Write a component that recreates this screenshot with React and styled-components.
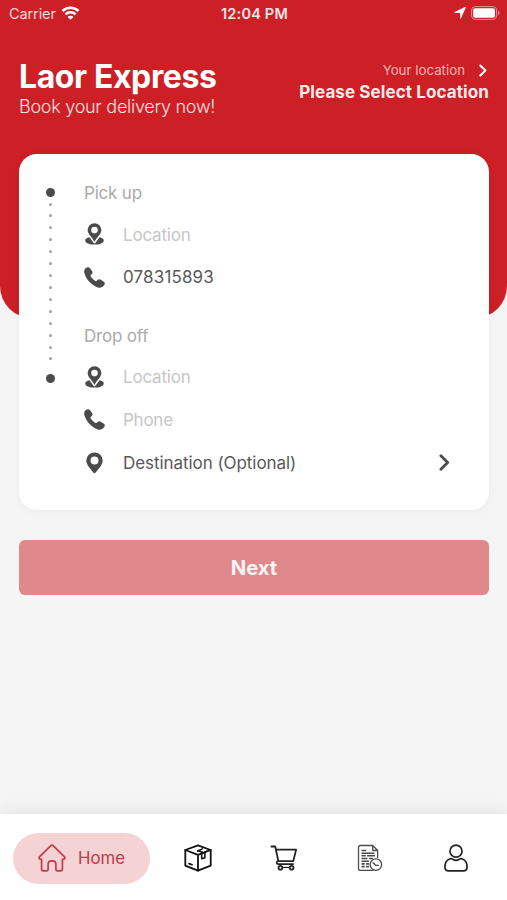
import { useState } from 'react';
import styled, { createGlobalStyle } from 'styled-components';

const App = () => {
  const [tab, setTab] = useState('home');

  return (
    <>
      <GlobalStyle />
      <Screen>
        <Header>
          <StatusBar>
            <Carrier>
              Carrier
              <WifiIcon />
            </Carrier>
            <Clock>12:04 PM</Clock>
            <StatusIcons>
              <ArrowIcon />
              <BatteryIcon />
            </StatusIcons>
          </StatusBar>
          <TitleRow>
            <div>
              <Title>Laor Express</Title>
              <Subtitle>Book your delivery now!</Subtitle>
            </div>
            <LocationPicker>
              <LocationLabel>
                Your location
                <ChevronIcon width={8} height={13} />
              </LocationLabel>
              <LocationValue>Please Select Location</LocationValue>
            </LocationPicker>
          </TitleRow>
        </Header>

        <Card>
          <Timeline>
            <Stop />
            <Dots>
              {dots.map(dot => (
                <Dot key={dot} />
              ))}
            </Dots>
            <Stop />
          </Timeline>
          <Fields>
            <GroupLabel>Pick up</GroupLabel>
            <Field>
              <PlaceIcon />
              <FieldText $empty $spacing={-0.2}>Location</FieldText>
            </Field>
            <Field>
              <PhoneIcon />
              <FieldText $spacing={0.15}>078315893</FieldText>
            </Field>
            <GroupLabel $second>Drop off</GroupLabel>
            <Field>
              <PlaceIcon />
              <FieldText $empty $spacing={-0.2}>Location</FieldText>
            </Field>
            <Field>
              <PhoneIcon />
              <FieldText $empty $spacing={-0.25}>Phone</FieldText>
            </Field>
            <Field>
              <PinIcon />
              <FieldText $spacing={-0.06}>Destination (Optional)</FieldText>
              <ChevronIcon width={11} height={17} />
            </Field>
          </Fields>
        </Card>

        <NextButton>Next</NextButton>

        <TabBar>
          {tabs.map(({ id, label, Icon }) => (
            <Tab
              key={id}
              $active={tab === id}
              aria-label={label}
              onClick={() => setTab(id)}
            >
              <Icon />
              {tab === id && <span>{label}</span>}
            </Tab>
          ))}
        </TabBar>
      </Screen>
    </>
  );
};

export default App;

const dots = Array.from({ length: 14 }, (_, i) => i);

const WifiIcon = () => (
  <svg width="19" height="14" viewBox="0 0 18 14" fill="none" stroke="#fff" strokeWidth="2.5">
    <path d="M1 5a11.6 11.6 0 0 1 16 0" />
    <path d="M3.9 8.4a7.4 7.4 0 0 1 10.2 0" />
    <path d="M9 13.8 6 10.9a4.2 4.2 0 0 1 6 0Z" fill="#fff" stroke="none" />
  </svg>
);

const ArrowIcon = () => (
  <svg width="12" height="12" viewBox="0 0 12 12" fill="#fff">
    <path d="M11.7.7 7 11.3c-.2.5-.9.4-.9-.2V6H.9C.3 6 .2 5.3.7 5.1L11 .1c.6-.2 1 .1.7.6Z" />
  </svg>
);

const BatteryIcon = () => (
  <svg width="29" height="14" viewBox="0 0 29 14" fill="none">
    <rect x=".6" y=".6" width="25" height="12.8" rx="3.6" stroke="#fff" strokeOpacity=".5" />
    <rect x="2.2" y="2.2" width="21.8" height="9.6" rx="2" fill="#fff" />
    <path d="M27.2 4.8c1.8.6 1.8 3.8 0 4.4Z" fill="#fff" fillOpacity=".55" />
  </svg>
);

const ChevronIcon = props => (
  <svg viewBox="0 0 10 16" fill="none" stroke="currentColor" {...props}>
    <path d="m1.6 1.7 6.4 6.3-6.4 6.3" strokeWidth="2.6" strokeLinecap="round" strokeLinejoin="round" />
  </svg>
);

const PlaceIcon = () => (
  <svg width="20" height="22" viewBox="0 0 20 22" fill="#4b4b4d">
    <path
      fillRule="evenodd"
      d="M10 .2a6.9 6.9 0 0 1 6.9 6.9c0 3.7-3.6 6.2-6.9 11.7C6.7 13.3 3.1 10.8 3.1 7.1A6.9 6.9 0 0 1 10 .2Zm0 3.6a3.3 3.3 0 1 0 0 6.6 3.3 3.3 0 0 0 0-6.6Z"
    />
    <path d="M5 14.3 9.2 20q.8.9 1.6 0l4.2-5.7c2.6.6 4.3 1.7 4.3 3.1 0 2.5-4.2 4.2-9.3 4.2S.7 19.900.7 17.4c0-1.4 1.7-2.5 4.3-3.1Z" />
  </svg>
);

const PhoneIcon = () => (
  <svg width="21" height="21" viewBox="0 0 21 21" fill="#4b4b4d">
    <path d="M1.300 1.500C3 0 4.800-.3 6 1.200l2 2.700c.8 1.100.7 2.300-.3 3.200l-.9.9c-.5.500-.4 1 .1 1.800 1 1.500 2.300 2.800 4.100 3.900.8.5 1.300.5 1.800 0l1-.9c.9-.8 2-.9 3-.1l3 2.100c1.300 1 1.300 2.300.3 3.500-1.700 2.100-3.700 2.900-6.300 2.100C7.900 18.600 2.300 12.900.5 6.600-.1 4.400.1 2.700 1.300 1.500Z" />
  </svg>
);

const PinIcon = () => (
  <svg width="20" height="22" viewBox="0 0 20 22" fill="#4b4b4d">
    <path
      fillRule="evenodd"
      d="M10 .4a8.200 8.200 0 0 1 8.200 8.200c0 4.400-4.600 8.800-7.300 12.200q-.9 1-1.800 0C6.400 17.400 1.800 13 1.800 8.600A8.200 8.200 0 0 1 10 .4Zm0 4a4 4 0 1 0 0 8 4 4 0 0 0 0-8Z"
    />
  </svg>
);

const HomeIcon = () => (
  <svg width="28" height="28" viewBox="0 0 28 28" fill="none" stroke="currentColor" strokeWidth="1.7" strokeLinejoin="round">
    <path d="M12.9 1.6q1.1-1 2.200 0l11.200 11c1.300 1.300.5 2.700-1.100 2.700h-.8v9.800q0 1.700-1.700 1.700h-3.500q-1.300 0-1.300-1.300v-5.300c0-4.400-7.800-4.400-7.800 0v5.300q0 1.300-1.300 1.300H5.300q-1.700 0-1.700-1.700v-9.800h-.8c-1.600 0-2.400-1.400-1.100-2.700Z" />
  </svg>
);

const BoxIcon = () => (
  <svg width="28" height="28" viewBox="0 0 28 28" fill="none" stroke="#111" strokeWidth="1.8" strokeLinejoin="round" strokeLinecap="round">
    <path d="M14 1.3 26.7 6v15.6L14 26.7 1.3 21.6V6Z" />
    <path d="M1.3 6 14 10.8 26.7 6M14 10.8v15.900" />
    <path d="m13.4 7.1 4.9-2.2M18.3 9.2l4.7-2.1" strokeWidth="1.5" />
    <path d="M17.7 9.8v5l3.2-1V8.500" strokeWidth="1.6" />
    <path d="m14.3 6.6 4.5 1.9M5 19.6l3.1 1.1" strokeWidth="1.7" />
  </svg>
);

const CartIcon = () => (
  <svg width="28" height="28" viewBox="0 0 28 28" fill="none" stroke="#222" strokeWidth="1.8" strokeLinejoin="round">
    <path d="M.7 2.500h4.500l3.200 14.600h14.900l2.800-11.500H6.100M8.400 16.800c-2 .2-2.300 3.400 0 3.400h15.400" />
    <circle cx="10.4" cy="23.7" r="1.9" />
    <circle cx="21.6" cy="23.7" r="1.9" />
    <path d="M12.4 23.4h7.2" strokeWidth="1.2" />
  </svg>
);

const HistoryIcon = () => (
  <svg width="26" height="28" viewBox="0 0 26 28" fill="none" stroke="#4c4c4c" strokeWidth="1.3" strokeLinejoin="round">
    <path d="M20.6 14V6.500l-4.900-5H3.400q-1.900 0-1.900 1.900v21q0 1.900 1.900 1.900h13.100M15.700 1.500v5h4.900" />
    <path d="M4.5 6.500h4.500M4.5 9.200h13M4.5 11.8h4.300M10.1 11.8h8M4.5 14.500h6M12 14.500h4M4.5 17.200h7.500M4.5 19.900h3.200M9.1 19.900h3M4.5 22.600h3.200M9.1 22.600h3" strokeWidth="1.6" />
    <circle cx="18.9" cy="20.6" r="5.7" />
    <path d="m15.7 18.5 3.2 2.900h2.900" />
  </svg>
);

const UserIcon = () => (
  <svg width="24" height="28" viewBox="0 0 24 28" fill="none" stroke="#222" strokeWidth="1.7" strokeLinejoin="round">
    <circle cx="12" cy="7.2" r="6" />
    <path d="M6.2 14.700q1.200-.4 2.300.4c2.200 1.700 4.800 1.700 7 0q1.100-.8 2.300-.4c3.700 1.200 5.300 4.500 5.300 8.200q0 3.900-3.700 3.900H4.600q-3.700 0-3.700-3.900c0-3.700 1.600-7 5.300-8.200Z" />
  </svg>
);

const tabs = [
  { id: 'home', label: 'Home', Icon: HomeIcon },
  { id: 'packages', label: 'Packages', Icon: BoxIcon },
  { id: 'cart', label: 'Cart', Icon: CartIcon },
  { id: 'history', label: 'History', Icon: HistoryIcon },
  { id: 'profile', label: 'Profile', Icon: UserIcon },
];

const GlobalStyle = createGlobalStyle`
  * {
    box-sizing: border-box;
  }
  body {
    margin: 0;
    font-family: Inter, 'Liberation Sans', sans-serif;
  }
  button {
    font-family: inherit;
    border: none;
    cursor: pointer;
  }
  svg {
    display: block;
    flex-shrink: 0;
  }
`;

const Screen = styled.div`
  display: flex;
  flex-direction: column;
  width: 507px;
  height: 900px;
  overflow: hidden;
  background: #f5f5f5;
`;

const Header = styled.header`
  flex: 0 0 318px;
  background: #cd1f26;
  border-radius: 0 0 32px 32px;
  color: #fff;
`;
const StatusBar = styled.div`
  display: grid;
  grid-template-columns: 1fr auto 1fr;
  align-items: center;
  height: 26px;
  padding: 0 7px 0 9px;
`;
const Carrier = styled.div`
  display: flex;
  align-items: center;
  gap: 5px;
  font-size: 14.5px;
  letter-spacing: -0.1px;
  color: #fbd9d9;
`;
const Clock = styled.div`
  font-size: 14.5px;
  font-weight: 600;
  letter-spacing: 0.2px;
  color: #fde6e6;
`;
const StatusIcons = styled.div`
  display: flex;
  align-items: center;
  justify-content: flex-end;
  gap: 5px;
`;
const TitleRow = styled.div`
  display: flex;
  justify-content: space-between;
  padding: 32px 18px 0 19px;
`;
const Title = styled.h1`
  margin: 0;
  font-size: 32px;
  line-height: 38px;
  font-weight: 700;
  letter-spacing: -0.4px;
`;
const Subtitle = styled.div`
  font-size: 18px;
  line-height: 21px;
  font-weight: 300;
  letter-spacing: -0.27px;
  color: #fce0e0;
`;
const LocationPicker = styled.div`
  padding-top: 2px;
  text-align: right;
`;
const LocationLabel = styled.div`
  display: flex;
  align-items: center;
  justify-content: flex-end;
  gap: 14px;
  height: 20px;
  font-size: 13.3px;
  color: #f5b5b6;

  svg {
    color: #fff;
    margin-right: 2px;
  }
`;
const LocationValue = styled.div`
  font-size: 17px;
  line-height: 24px;
  font-weight: 650;
  letter-spacing: 0.1px;
  color: #fdeaea;
`;

const Card = styled.section`
  display: flex;
  flex: 0 0 356px;
  margin: -164px 18px 0 19px;
  padding: 28px 39px 0 27px;
  background: #fff;
  border-radius: 18px;
  box-shadow: 0 1px 10px rgba(0, 0, 0, 0.05);
`;
const Timeline = styled.div`
  display: flex;
  flex-direction: column;
  align-items: center;
  justify-content: space-between;
  width: 9px;
  height: 195px;
  margin: 6px 29px 0 0;
`;
const Stop = styled.div`
  width: 9px;
  height: 9px;
  border-radius: 50%;
  background: #4b4b4d;
`;
const Dots = styled.div`
  display: flex;
  flex-direction: column;
  justify-content: space-between;
  height: 158px;
  margin-bottom: 8px;
`;
const Dot = styled.div`
  width: 3px;
  height: 3px;
  border-radius: 50%;
  background: #a0a0a0;
`;
const Fields = styled.div`
  flex: 1;
`;
const GroupLabel = styled.div`
  height: 21px;
  margin: ${({ $second }) => ($second ? '26px' : 0)} 0 10px;
  line-height: 22px;
  font-size: 17px;
  letter-spacing: -0.2px;
  color: #aaa;
`;
const Field = styled.div`
  display: flex;
  align-items: center;
  height: 42.8px;

  > svg:first-child {
    width: 21px;
  }
`;
const FieldText = styled.div`
  flex: 1;
  margin-left: 18px;
  padding-top: 0.5px;
  font-size: 17px;
  letter-spacing: ${({ $spacing }) => $spacing || 0}px;
  color: ${({ $empty }) => ($empty ? '#c6c6c6' : '#58585a')};

  + svg {
    color: #4b4b4d;
  }
`;

const NextButton = styled.button`
  flex: 0 0 55px;
  margin: 30px 18px 0 19px;
  border-radius: 6px;
  background: #df898b;
  color: #fff5f5;
  font-size: 20.3px;
  font-weight: 650;
`;

const TabBar = styled.nav`
  display: flex;
  align-items: center;
  height: 86px;
  margin-top: auto;
  padding: 0 8px 0 13px;
  background: #fff;
  box-shadow: 0 -2px 16px rgba(0, 0, 0, 0.08);
`;
const Tab = styled.button`
  display: flex;
  align-items: center;
  justify-content: center;
  gap: 12px;
  flex: ${({ $active }) => ($active ? '0 0 137px' : '1')};
  height: 51px;
  margin: ${({ $active }) => ($active ? '2px 5px 0 0' : '2px 0 0')};
  padding: 0;
  border-radius: 26px;
  background: ${({ $active }) => ($active ? '#f5d2d4' : 'transparent')};
  color: #c33a48;
  font-size: 16.8px;
`;
